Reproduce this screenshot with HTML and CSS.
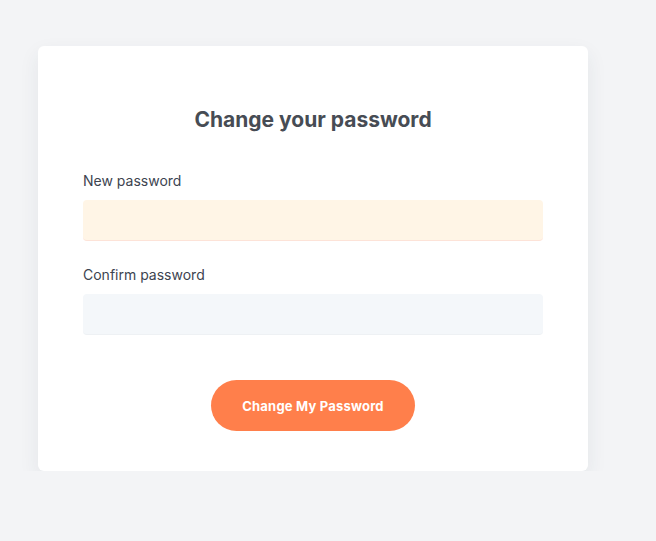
FILE: index.html
```html
<!DOCTYPE html>
<html lang="en">
<head>
  <meta charset="UTF-8" />
  <meta name="viewport" content="width=device-width, initial-scale=1" />
  <title>Change your password</title>
  <link rel="stylesheet" href="styles.css">
</head>
<body>
  <main class="reset-card" role="main">
    <h1>Change your password</h1>
    <form id="reset-form" novalidate>
      <div class="field">
        <label for="new-password">New password</label>
        <input id="new-password" class="input-autofill" type="password" name="password" />
      </div>
      <div class="field">
        <label for="confirm-password">Confirm password</label>
        <input id="confirm-password" type="password" name="confirm" />
      </div>
      <div class="form-buttons">
        <button type="submit">Change My Password</button>
      </div>
    </form>
  </main>
</body>
</html>
```

FILE: styles.css
```css
* {
  margin: 0;
  padding: 0;
  box-sizing: border-box;
}
body {
  font-family: Inter, 'Noto Sans', sans-serif;
  background: #f3f4f6;
  color: #3d4450;
  padding: 46px 0 0 38px;
}
main.reset-card {
  background: white;
  width: 550px;
  padding: 60px 45px 40px;
  border-radius: 6px;
  box-shadow: 0 8px 20px rgba(40, 60, 80, 0.08);
}
h1 {
  font-size: 21px;
  line-height: 28px;
  font-weight: 700;
  text-align: center;
  color: #474c54;
  margin-bottom: 37px;
}
form {
  display: flex;
  flex-direction: column;
  gap: 24px;
}
label {
  display: block;
  font-size: 14px;
  line-height: 20px;
  margin-bottom: 9px;
  color: #3d4450;
}
input[type="password"] {
  display: block;
  width: 100%;
  height: 41px;
  border: none;
  border-bottom: 1px solid #eef1f4;
  border-radius: 4px;
  background: #f4f7fa;
  font-size: 14px;
  padding: 0 12px;
  outline: none;
}
input.input-autofill {
  background: #fff5e6;
  border-bottom-color: #fde3d8;
}
.form-buttons {
  display: flex;
  justify-content: center;
  margin-top: 21px;
}
button {
  width: 204px;
  height: 51px;
  background-color: #ff7f4b;
  color: white;
  border: none;
  border-radius: 26px;
  font-family: inherit;
  font-weight: 700;
  font-size: 13px;
  letter-spacing: 0.2px;
  cursor: pointer;
}
button:hover {
  background-color: #f9703a;
}
```
